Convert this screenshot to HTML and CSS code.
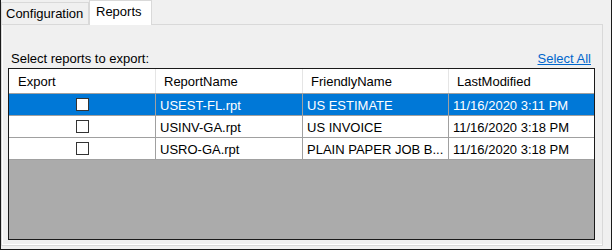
FILE: index.html
```html
<!DOCTYPE html>
<html>
<head>
<meta charset="utf-8">
<link rel="stylesheet" href="styles.css">
</head>
<body>
<div class="window">
  <div class="tabs">
    <div class="tab">Configuration</div>
    <div class="tab active">Reports</div>
  </div>
  <div class="page">
    <div class="toolbar">
      <span class="label">Select reports to export:</span>
      <a class="link">Select All</a>
    </div>
    <div class="grid">
      <div class="row head">
        <div class="cell c1">Export</div>
        <div class="cell c2">ReportName</div>
        <div class="cell c3">FriendlyName</div>
        <div class="cell c4">LastModified</div>
      </div>
      <div class="row selected">
        <div class="cell c1 center"><span class="check"></span></div>
        <div class="cell c2">USEST-FL.rpt</div>
        <div class="cell c3">US ESTIMATE</div>
        <div class="cell c4">11/16/2020 3:11 PM</div>
      </div>
      <div class="row">
        <div class="cell c1 center"><span class="check"></span></div>
        <div class="cell c2">USINV-GA.rpt</div>
        <div class="cell c3">US INVOICE</div>
        <div class="cell c4">11/16/2020 3:18 PM</div>
      </div>
      <div class="row">
        <div class="cell c1 center"><span class="check"></span></div>
        <div class="cell c2">USRO-GA.rpt</div>
        <div class="cell c3">PLAIN PAPER JOB B...</div>
        <div class="cell c4">11/16/2020 3:18 PM</div>
      </div>
    </div>
  </div>
</div>
</body>
</html>
```

FILE: styles.css
```css
html, body {
  margin: 0;
  padding: 0;
  background: #f0f0f0;
}
body {
  font-family: "Liberation Sans", Arial, sans-serif;
  font-size: 13px;
  color: #000;
}
.window {
  width: 612px;
  height: 250px;
  box-sizing: border-box;
  border: 1px solid #1a1a1a;
  border-top: none;
  background: #f0f0f0;
}
.tabs {
  display: flex;
  align-items: flex-end;
  height: 24px;
}
.tab {
  box-sizing: border-box;
  height: 22px;
  width: 88px;
  border: 1px solid #d9d9d9;
  border-bottom: none;
  padding: 0 0 0 4px;
  line-height: 21px;
  background: #f0f0f0;
  white-space: nowrap;
}
.tab.active {
  width: 63px;
  height: 25px;
  margin-bottom: -1px;
  padding-left: 6px;
  line-height: 21px;
  background: #fff;
  position: relative;
  z-index: 1;
}
.page {
  box-sizing: border-box;
  width: 602px;
  height: 222px;
  border: 1px solid #d9d9d9;
  box-shadow: inset 1px 0 #fff, inset 0 -1px #fff;
  padding: 26px 7px 0 6px;
}
.toolbar {
  display: flex;
  justify-content: space-between;
  height: 15px;
  line-height: 15px;
  margin-bottom: 2px;
}
.label {
  margin-left: 3px;
}
.link {
  color: #0066cc;
  text-decoration: underline;
  margin-right: 4px;
}
.grid {
  box-sizing: border-box;
  height: 172px;
  border: 1px solid #1a1a1a;
  background: #ababab;
}
.row {
  display: flex;
  height: 21px;
  border-bottom: 1px solid #a0a0a0;
  background: #fff;
}
.row.head {
  height: 24px;
}
.cell {
  box-sizing: border-box;
  border-right: 1px solid #a0a0a0;
  padding-left: 4px;
  padding-top: 1px;
  display: flex;
  align-items: center;
  white-space: nowrap;
  overflow: hidden;
}
.head .cell {
  border-right-color: #e5e5e5;
  padding-left: 8px;
}
.head .c1 {
  padding-left: 9px;
}
.c1 { width: 147px; }
.c2 { width: 147px; }
.c3 { width: 146px; }
.c4 { flex: 1; border-right: none; }
.center {
  justify-content: center;
  padding-left: 0;
  padding-top: 0;
}
.check {
  display: block;
  box-sizing: border-box;
  width: 13px;
  height: 13px;
  border: 1px solid #333;
  background: #fff;
}
.selected {
  background: #0078d7;
  color: #fff;
}
```
